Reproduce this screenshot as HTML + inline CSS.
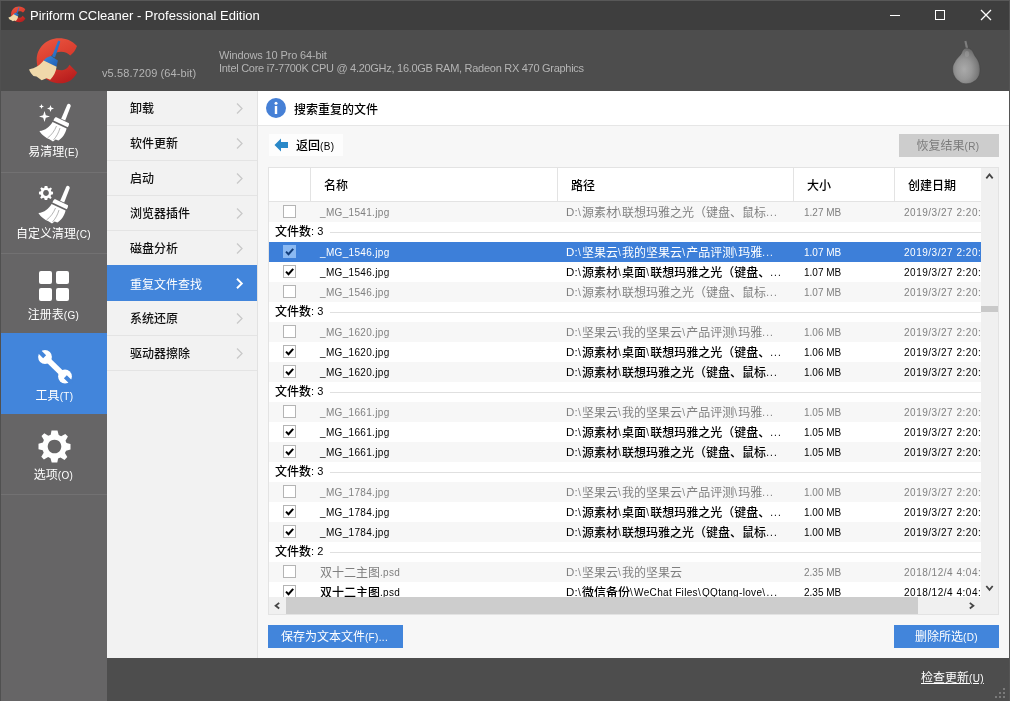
<!DOCTYPE html>
<html lang="zh-CN">
<head>
<meta charset="utf-8">
<title>Piriform CCleaner - Professional Edition</title>
<style>
*{box-sizing:border-box;margin:0;padding:0}
html,body{width:1010px;height:701px;overflow:hidden;background:#4d4d4d}
body{position:relative;font-family:"Liberation Sans","Noto Sans CJK SC",sans-serif;font-size:12px;color:#000}
.abs{position:absolute}
#titlebar{position:absolute;left:0;top:0;width:1010px;height:30px;background:#3e3e3e}
#title{position:absolute;left:30px;top:8px;font-size:13px;line-height:16px;color:#fff;white-space:nowrap;letter-spacing:0px}
#header{position:absolute;left:0;top:30px;width:1010px;height:61px;background:#4d4d4d}
.hd{position:absolute;color:#b4b4b4;font-size:11px;line-height:14px;white-space:nowrap}
#sidebar{position:absolute;left:0;top:91px;width:107px;height:610px;background:#666566}
.sb{position:absolute;left:0;width:107px;color:#fff;text-align:center}
.sb .lb{position:absolute;left:0;width:107px;text-align:center;font-size:12px;line-height:16px;white-space:nowrap}
.sdiv{position:absolute;left:0;width:107px;height:1px;background:#727172}
#submenu{position:absolute;left:107px;top:91px;width:150px;height:567px;background:#f2f2f2}
.sm{position:absolute;left:0;width:150px;height:35px;border-bottom:1px solid #e4e4e4;padding-left:23px;line-height:37px;font-size:12px;color:#111}
.sm.act{background:#4285db;color:#fff;border-bottom-color:#4285db}
.sm.act svg{top:12px}
.sm svg{position:absolute;left:129px;top:11px}
#content{position:absolute;left:257px;top:91px;width:752px;height:567px;background:#f7f7f7;border-left:1px solid #e2e2e2}
#chead{position:absolute;left:0;top:0;width:751px;height:35px;background:#fff;border-bottom:1px solid #e6e6e6}
#footer{position:absolute;left:107px;top:658px;width:903px;height:43px;background:#4d4d4d}
#table{position:absolute;left:268px;top:167px;width:731px;height:448px;border:1px solid #e3e3e3;background:#fff;overflow:hidden}
#thead{position:absolute;left:0;top:0;width:713px;height:34px;background:#fff;border-bottom:1px solid #e3e3e3}
.th{position:absolute;top:0;height:33px;line-height:37px;font-size:12px;color:#000;border-left:1px solid #e3e3e3;white-space:nowrap}
#rows{position:absolute;left:0;top:34px;width:713px;height:396px;overflow:hidden}
.row{position:relative;height:20px;width:713px;white-space:nowrap;font-size:12px;line-height:23px;color:#000;overflow:hidden}
.row.st{background:#f7f7f7}
.row.off{color:#808080}
.row.sel{background:#3d7fd9;color:#fff}
.row>span{position:absolute;top:0;height:20px}
.l{font-size:10px;letter-spacing:0.33px}
.row .l{position:relative;top:-1px}
.cb{left:14px;top:3px !important;width:13px;height:13px !important;border:1px solid #b4b4b4;background:#fff;color:#000}
.cb svg{position:absolute;left:-1px;top:-1px}
.sel .cb{background:#8bb9f2;border-color:#8bb9f2;color:#123e7c}
.c1{left:51px}
.c2{left:297px;width:215px;overflow:hidden;font-size:12px}
.c2 .l{letter-spacing:0.33px}
.b{font-style:normal;letter-spacing:1.3px}
.d{font-style:normal;letter-spacing:1.1px}
.dr{font-style:normal;font-size:11.5px;letter-spacing:0.2px}
.c3{left:535px;font-size:10px;top:-1px !important}
.c4{left:635px;width:78px;overflow:hidden;font-size:10px;letter-spacing:0.52px;top:-1px !important}
.grp{color:#000;background:#fff}
.grp .gl{left:6px;top:-1px;font-size:12px}
.grp .l{font-size:11px;letter-spacing:0.1px}
.gline{position:absolute;left:61px;top:10px;width:660px;height:1px;background:#e0e0e0}
.btn{position:absolute;height:23px;line-height:24px;font-size:12px;text-align:center;white-space:nowrap}
.sm,.th,.row.on,.grp,#chead,.bk{font-weight:500}
.sm.act,.row.sel{font-weight:400}
</style>
</head>
<body><div id="root" style="position:absolute;left:0;top:0;width:1010px;height:701px;will-change:transform">
<div id="titlebar">
  <svg class="abs" style="left:8px;top:6px" width="18" height="16.600" viewBox="28 37 51 47"><use href="#cclogo"/></svg>
  <div id="title">Piriform CCleaner - Professional Edition</div>
  <svg class="abs" style="left:885px;top:5px" width="112" height="20" viewBox="0 0 112 20" fill="none" stroke="#fff" stroke-width="1">
    <path d="M5 10.5 H15"/>
    <rect x="50.5" y="5.5" width="9" height="9"/>
    <path d="M96 5 L106 15 M106 5 L96 15" stroke-width="1.300"/>
  </svg>
</div>
<div id="header">
  <svg class="abs" style="left:28px;top:7px" width="51" height="47" viewBox="28 37 51 47">
    <defs>
      <linearGradient id="lg1" x1="0.200" y1="0" x2="0.600" y2="1"><stop offset="0" stop-color="#ea5540"/><stop offset="0.550" stop-color="#d83a2c"/><stop offset="1" stop-color="#b91f1f"/></linearGradient>
      <linearGradient id="lg2" x1="0" y1="0" x2="1" y2="1"><stop offset="0" stop-color="#3a86d8"/><stop offset="1" stop-color="#1f5fb4"/></linearGradient>
    </defs>
    <g id="cclogo">
    <path d="M77 46 C72 40.500 66 38.200 59 38.200 C46 38.200 36.700 48 36.700 60 C36.700 73.500 47 83.300 60 83.300 C67 83.300 73 80.500 77.200 72.500 L69.500 64.800 C67.500 68.500 65 70.200 62 70.200 C54.500 70.200 49.400 66 49.400 61 C49.400 55.500 54.500 51.700 61 51.700 C65 51.700 68 53 70.200 55.600 C73 53.500 75.500 50.500 77 46 Z" fill="url(#lg1)"/>
    <path d="M58 41 Q59.500 40.500 60.300 41.800 L55 57.500 L52 56.300 Z" fill="url(#lg2)"/>
    <path d="M51 56 L57.900 60.600 L56.400 67 L43.600 60.800 Q46 57 51 56 Z" fill="url(#lg2)"/>
    <path d="M43.600 60.600 L56.600 66.800 C56 72 53.500 76.500 50.200 79.700 L46.500 78.300 L41.700 80.300 L36.500 76.500 L33.500 76 C31.500 74 30 72 29 69.400 C35 68.500 40.500 65 43.600 60.600 Z" fill="#f0d9aa"/>
    </g>
  </svg>
  <div class="hd" style="left:102px;top:36px;font-size:11px;letter-spacing:0.1px">v5.58.7209 (64-bit)</div>
  <div class="hd" style="left:219px;top:18px;letter-spacing:-0.14px">Windows 10 Pro 64-bit</div>
  <div class="hd" style="left:219px;top:31px;letter-spacing:-0.28px">Intel Core i7-7700K CPU @ 4.20GHz, 16.0GB RAM, Radeon RX 470 Graphics</div>
  <svg class="abs" style="left:951px;top:10px" width="31" height="45" viewBox="0 0 31 45">
    <defs><radialGradient id="pg" cx="0.420" cy="0.600" r="0.620"><stop offset="0" stop-color="#aaa"/><stop offset="0.450" stop-color="#979797"/><stop offset="0.800" stop-color="#7c7c7c"/><stop offset="1" stop-color="#666"/></radialGradient></defs>
    <path d="M13.400 1.200 L15.400 0.800 L17.200 8.600 L15 9 Z" fill="#7e7e7e"/>
    <path d="M15.600 8 C19 8 21.500 10 22.600 13.200 C23.500 15.500 24.500 16.800 25.300 17.800 C27 20 29 24 29 29 C29 33 28.500 35 27.700 36.300 C26.500 39 24.500 40.500 23.500 41 C21 43 18 43.750 15 43.750 C12 43.750 10 43 7.800 41 C6 40 4.500 38.500 3.600 36.300 C2.500 34.500 1.700 32 1.700 28.900 C1.700 25.500 2.500 24 3.600 22.400 C4.500 20.500 5.500 19.200 6.800 17.800 C8.500 16 9.500 14.800 10.500 13.200 C11.500 10 13 8 15.600 8 Z" fill="url(#pg)" stroke="#3c3c3c" stroke-width="0.700" stroke-opacity="0.600"/>
    <ellipse cx="16" cy="14" rx="2.200" ry="3" fill="#a4a4a4" opacity="0.400"/>
  </svg>
</div>

<div id="sidebar">
  <div class="sdiv" style="top:81px"></div>
  <div class="sdiv" style="top:162px"></div>
  <div class="abs" style="left:1px;top:242px;width:106px;height:81px;background:#4285db"></div>
  <div class="sdiv" style="top:403px"></div>
  <!-- icons -->
  <svg class="abs" style="left:36px;top:10px" width="40" height="42" viewBox="0 0 40 42" fill="#fff">
    <g id="broom">
    <path d="M31 4.200 Q31.800 2.400 33.600 3 Q35.200 3.800 34.600 5.400 L29.200 19.600 L25.200 17.800 Z"/>
    <path d="M19.800 16 L33 22.200 Q33.400 24.400 31.800 26.200 L17.400 19.600 Q18 17.200 19.800 16 Z"/>
    <path d="M16.600 21 L30.600 27.600 C29.600 32.600 26.400 37 22.400 39.600 L19.600 38.400 L17 40.600 L13.400 38.200 L11 37.200 L8.600 35.600 C6.400 34 4.600 32.200 3.400 30 C9.400 29.400 13.800 25.800 16.600 21 Z"/>
    <path d="M24 27 C22.500 32 20.500 35.500 17.500 39 M20.500 25 C18.500 30 15.500 34 11.500 37" fill="none" stroke="#666566" stroke-width="0.700" opacity="0.700"/>
    </g>
    <path d="M5.500 3 L6.200 4.800 L8 5.500 L6.200 6.200 L5.500 8 L4.800 6.200 L3 5.500 L4.800 4.800 Z"/>
    <path d="M14.500 4 L15.400 6.600 L18 7.500 L15.400 8.400 L14.500 11 L13.600 8.400 L11 7.500 L13.600 6.600 Z"/>
    <path d="M8.500 10 L9.800 14.200 L14 15.500 L9.800 16.800 L8.500 21 L7.200 16.800 L3 15.500 L7.200 14.200 Z"/>
  </svg>
  <div class="lb sb" style="top:53px"><div class="lb">易清理<span class="l">(E)</span></div></div>

  <svg class="abs" style="left:35px;top:92px" width="40" height="42" viewBox="0 0 40 42" fill="#fff">
    <use href="#broom"/>
    <path id="gear8" transform="translate(11,10) scale(0.44)" d="M-3 -16 L3 -16 L4.2 -11.4 L6.6 -10.2 L10.8 -12.6 L13.4 -10 L11 -5.8 L12 -3.4 L16 -2.6 L16 3 L11.6 4.2 L10.4 6.6 L12.8 10.6 L10 13.4 L6 11 L3.6 12 L2.8 16 L-2.8 16 L-4 11.8 L-6.4 10.6 L-10.6 13 L-13.2 10.2 L-10.8 6.2 L-11.8 3.8 L-16 2.8 L-16 -2.8 L-11.6 -4 L-10.6 -6.4 L-13 -10.4 L-10.2 -13.2 L-6.2 -10.8 L-3.8 -11.8 Z M0 -6.6 A6.6 6.6 0 1 0 0.01 -6.6 Z" fill-rule="evenodd"/>
  </svg>
  <div class="lb sb" style="top:135px"><div class="lb">自定义清理<span class="l">(C)</span></div></div>

  <svg class="abs" style="left:39px;top:180px" width="30" height="30" viewBox="0 0 30 30" fill="#fff">
    <rect x="0" y="0" width="13" height="13" rx="2"/><rect x="17" y="0" width="13" height="13" rx="2"/>
    <rect x="0" y="17" width="13" height="13" rx="2"/><rect x="17" y="17" width="13" height="13" rx="2"/>
  </svg>
  <div class="lb sb" style="top:216px"><div class="lb">注册表<span class="l">(G)</span></div></div>

  <svg class="abs" style="left:37px;top:258px" width="36" height="36" viewBox="0 0 36 36">
    <circle cx="8.0" cy="8.0" r="6.900" fill="#fff"/><circle cx="28.0" cy="27.5" r="6.900" fill="#fff"/>
    <path d="M8.000 8.000 L28.000 27.500" stroke="#fff" stroke-width="5.600" fill="none"/>
    <path d="M7.642 7.651 L1.556 1.717 M28.358 27.849 L34.444 33.783" stroke="#4285db" stroke-width="4.200" fill="none"/>
  </svg>
  <div class="lb sb" style="top:297px;left:1px"><div class="lb">工具<span class="l">(T)</span></div></div>

  <svg class="abs" style="left:37.500px;top:338.500px" width="33" height="33" viewBox="-16.500 -16.500 33 33" fill="#fff">
    <path d="M-3 -16 L3 -16 L4.2 -11.4 L6.6 -10.2 L10.8 -12.6 L13.4 -10 L11 -5.8 L12 -3.4 L16 -2.6 L16 3 L11.6 4.2 L10.4 6.6 L12.800 10.600 L10 13.400 L6 11 L3.600 12 L2.800 16 L-2.800 16 L-4 11.800 L-6.400 10.600 L-10.600 13 L-13.200 10.200 L-10.800 6.200 L-11.800 3.800 L-16 2.800 L-16 -2.800 L-11.600 -4 L-10.600 -6.400 L-13 -10.400 L-10.200 -13.200 L-6.200 -10.800 L-3.800 -11.800 Z M0 -6.800 A6.800 6.800 0 1 0 0.010 -6.800 Z" fill-rule="evenodd"/>
  </svg>
  <div class="lb sb" style="top:376px"><div class="lb">选项<span class="l">(O)</span></div></div>
</div>

<div id="submenu">
  <div class="sm" style="top:0">卸载<svg width="8" height="13" viewBox="0 0 8 13"><path d="M1 1.500 L6 6.500 L1 11.500" fill="none" stroke="#c9c9c9" stroke-width="1.300"/></svg></div>
  <div class="sm" style="top:35px">软件更新<svg width="8" height="13" viewBox="0 0 8 13"><path d="M1 1.500 L6 6.500 L1 11.500" fill="none" stroke="#c9c9c9" stroke-width="1.300"/></svg></div>
  <div class="sm" style="top:70px">启动<svg width="8" height="13" viewBox="0 0 8 13"><path d="M1 1.500 L6 6.500 L1 11.500" fill="none" stroke="#c9c9c9" stroke-width="1.300"/></svg></div>
  <div class="sm" style="top:105px">浏览器插件<svg width="8" height="13" viewBox="0 0 8 13"><path d="M1 1.500 L6 6.500 L1 11.500" fill="none" stroke="#c9c9c9" stroke-width="1.300"/></svg></div>
  <div class="sm" style="top:140px">磁盘分析<svg width="8" height="13" viewBox="0 0 8 13"><path d="M1 1.500 L6 6.500 L1 11.500" fill="none" stroke="#c9c9c9" stroke-width="1.300"/></svg></div>
  <div class="sm act" style="top:174px;height:36px;line-height:40px">重复文件查找<svg width="8" height="13" viewBox="0 0 8 13"><path d="M1 1.800 L5.800 6.500 L1 11.200" fill="none" stroke="#fff" stroke-width="1.900"/></svg></div>
  <div class="sm" style="top:210px">系统还原<svg width="8" height="13" viewBox="0 0 8 13"><path d="M1 1.500 L6 6.500 L1 11.500" fill="none" stroke="#c9c9c9" stroke-width="1.300"/></svg></div>
  <div class="sm" style="top:245px">驱动器擦除<svg width="8" height="13" viewBox="0 0 8 13"><path d="M1 1.500 L6 6.500 L1 11.500" fill="none" stroke="#c9c9c9" stroke-width="1.300"/></svg></div>
</div>

<div id="content">
  <div id="chead">
    <svg class="abs" style="left:8px;top:7px" width="20" height="20" viewBox="0 0 20 20"><circle cx="10" cy="10" r="10" fill="#4680d6"/><rect x="8.800" y="8" width="2.400" height="8" fill="#fff"/><circle cx="10" cy="5.200" r="1.500" fill="#fff"/></svg>
    <div class="abs" style="left:36px;top:11px;font-size:12px;line-height:16px;white-space:nowrap">搜索重复的文件</div>
  </div>
</div>

<div class="abs" style="left:269px;top:134px;width:74px;height:22px;background:#fdfdfd"></div>
<svg class="abs" style="left:274px;top:138px" width="15" height="14" viewBox="0 0 15 14"><path d="M0.500 7 L7 0.500 L7 4 L14 4 L14 10 L7 10 L7 13.500 Z" fill="#2a88c8"/></svg>
<div class="abs bk" style="left:296px;top:138px;font-size:12px;line-height:16px;white-space:nowrap">返回<span class="l">(B)</span></div>
<div class="btn" style="left:899px;top:134px;width:100px;padding-right:2px;background:#cdcdcd;color:#7b7b7b">恢复结果<span class="l">(R)</span></div>

<div id="table">
  <div id="thead">
    <div class="th" style="left:0;width:41px;border-left:0"></div>
    <div class="th" style="left:41px;width:247px;padding-left:13px">名称</div>
    <div class="th" style="left:288px;width:236px;padding-left:13px">路径</div>
    <div class="th" style="left:524px;width:101px;padding-left:13px">大小</div>
    <div class="th" style="left:625px;width:88px;padding-left:13px">创建日期</div>
  </div>
  <div id="rows">
<div class="row st off"><span class="cb"></span><span class="c1"><span class="l">_MG_1541.jpg</span></span><span class="c2"><span class="l"><i class="dr">D:</i><i class="b">\</i></span>源素材<span class="l"><i class="b">\</i></span>联想玛雅之光（键盘、鼠标<span class="l"><i class="d">...</i></span></span><span class="c3">1.27 MB</span><span class="c4">2019/3/27 2:20:35</span></div>
<div class="row grp"><span class="gl">文件数<span class="l">: 3</span></span><i class="gline"></i></div>
<div class="row st sel on"><span class="cb"><svg viewBox="0 0 13 13" width="13" height="13"><path d="M3 6.6 L5.5 9.2 L10.2 3.8" fill="none" stroke="currentColor" stroke-width="2"/></svg></span><span class="c1"><span class="l">_MG_1546.jpg</span></span><span class="c2"><span class="l"><i class="dr">D:</i><i class="b">\</i></span>坚果云<span class="l"><i class="b">\</i></span>我的坚果云<span class="l"><i class="b">\</i></span>产品评测<span class="l"><i class="b">\</i></span>玛雅<span class="l"><i class="d">...</i></span></span><span class="c3">1.07 MB</span><span class="c4">2019/3/27 2:20:35</span></div>
<div class="row on"><span class="cb"><svg viewBox="0 0 13 13" width="13" height="13"><path d="M3 6.6 L5.5 9.2 L10.2 3.8" fill="none" stroke="currentColor" stroke-width="2"/></svg></span><span class="c1"><span class="l">_MG_1546.jpg</span></span><span class="c2"><span class="l"><i class="dr">D:</i><i class="b">\</i></span>源素材<span class="l"><i class="b">\</i></span>桌面<span class="l"><i class="b">\</i></span>联想玛雅之光（键盘、<span class="l"><i class="d">...</i></span></span><span class="c3">1.07 MB</span><span class="c4">2019/3/27 2:20:35</span></div>
<div class="row st off"><span class="cb"></span><span class="c1"><span class="l">_MG_1546.jpg</span></span><span class="c2"><span class="l"><i class="dr">D:</i><i class="b">\</i></span>源素材<span class="l"><i class="b">\</i></span>联想玛雅之光（键盘、鼠标<span class="l"><i class="d">...</i></span></span><span class="c3">1.07 MB</span><span class="c4">2019/3/27 2:20:35</span></div>
<div class="row grp"><span class="gl">文件数<span class="l">: 3</span></span><i class="gline"></i></div>
<div class="row st off"><span class="cb"></span><span class="c1"><span class="l">_MG_1620.jpg</span></span><span class="c2"><span class="l"><i class="dr">D:</i><i class="b">\</i></span>坚果云<span class="l"><i class="b">\</i></span>我的坚果云<span class="l"><i class="b">\</i></span>产品评测<span class="l"><i class="b">\</i></span>玛雅<span class="l"><i class="d">...</i></span></span><span class="c3">1.06 MB</span><span class="c4">2019/3/27 2:20:35</span></div>
<div class="row on"><span class="cb"><svg viewBox="0 0 13 13" width="13" height="13"><path d="M3 6.6 L5.5 9.2 L10.2 3.8" fill="none" stroke="currentColor" stroke-width="2"/></svg></span><span class="c1"><span class="l">_MG_1620.jpg</span></span><span class="c2"><span class="l"><i class="dr">D:</i><i class="b">\</i></span>源素材<span class="l"><i class="b">\</i></span>桌面<span class="l"><i class="b">\</i></span>联想玛雅之光（键盘、<span class="l"><i class="d">...</i></span></span><span class="c3">1.06 MB</span><span class="c4">2019/3/27 2:20:35</span></div>
<div class="row st on"><span class="cb"><svg viewBox="0 0 13 13" width="13" height="13"><path d="M3 6.6 L5.5 9.2 L10.2 3.8" fill="none" stroke="currentColor" stroke-width="2"/></svg></span><span class="c1"><span class="l">_MG_1620.jpg</span></span><span class="c2"><span class="l"><i class="dr">D:</i><i class="b">\</i></span>源素材<span class="l"><i class="b">\</i></span>联想玛雅之光（键盘、鼠标<span class="l"><i class="d">...</i></span></span><span class="c3">1.06 MB</span><span class="c4">2019/3/27 2:20:35</span></div>
<div class="row grp"><span class="gl">文件数<span class="l">: 3</span></span><i class="gline"></i></div>
<div class="row st off"><span class="cb"></span><span class="c1"><span class="l">_MG_1661.jpg</span></span><span class="c2"><span class="l"><i class="dr">D:</i><i class="b">\</i></span>坚果云<span class="l"><i class="b">\</i></span>我的坚果云<span class="l"><i class="b">\</i></span>产品评测<span class="l"><i class="b">\</i></span>玛雅<span class="l"><i class="d">...</i></span></span><span class="c3">1.05 MB</span><span class="c4">2019/3/27 2:20:35</span></div>
<div class="row on"><span class="cb"><svg viewBox="0 0 13 13" width="13" height="13"><path d="M3 6.6 L5.5 9.2 L10.2 3.8" fill="none" stroke="currentColor" stroke-width="2"/></svg></span><span class="c1"><span class="l">_MG_1661.jpg</span></span><span class="c2"><span class="l"><i class="dr">D:</i><i class="b">\</i></span>源素材<span class="l"><i class="b">\</i></span>桌面<span class="l"><i class="b">\</i></span>联想玛雅之光（键盘、<span class="l"><i class="d">...</i></span></span><span class="c3">1.05 MB</span><span class="c4">2019/3/27 2:20:35</span></div>
<div class="row st on"><span class="cb"><svg viewBox="0 0 13 13" width="13" height="13"><path d="M3 6.6 L5.5 9.2 L10.2 3.8" fill="none" stroke="currentColor" stroke-width="2"/></svg></span><span class="c1"><span class="l">_MG_1661.jpg</span></span><span class="c2"><span class="l"><i class="dr">D:</i><i class="b">\</i></span>源素材<span class="l"><i class="b">\</i></span>联想玛雅之光（键盘、鼠标<span class="l"><i class="d">...</i></span></span><span class="c3">1.05 MB</span><span class="c4">2019/3/27 2:20:35</span></div>
<div class="row grp"><span class="gl">文件数<span class="l">: 3</span></span><i class="gline"></i></div>
<div class="row st off"><span class="cb"></span><span class="c1"><span class="l">_MG_1784.jpg</span></span><span class="c2"><span class="l"><i class="dr">D:</i><i class="b">\</i></span>坚果云<span class="l"><i class="b">\</i></span>我的坚果云<span class="l"><i class="b">\</i></span>产品评测<span class="l"><i class="b">\</i></span>玛雅<span class="l"><i class="d">...</i></span></span><span class="c3">1.00 MB</span><span class="c4">2019/3/27 2:20:35</span></div>
<div class="row on"><span class="cb"><svg viewBox="0 0 13 13" width="13" height="13"><path d="M3 6.6 L5.5 9.2 L10.2 3.8" fill="none" stroke="currentColor" stroke-width="2"/></svg></span><span class="c1"><span class="l">_MG_1784.jpg</span></span><span class="c2"><span class="l"><i class="dr">D:</i><i class="b">\</i></span>源素材<span class="l"><i class="b">\</i></span>桌面<span class="l"><i class="b">\</i></span>联想玛雅之光（键盘、<span class="l"><i class="d">...</i></span></span><span class="c3">1.00 MB</span><span class="c4">2019/3/27 2:20:35</span></div>
<div class="row st on"><span class="cb"><svg viewBox="0 0 13 13" width="13" height="13"><path d="M3 6.6 L5.5 9.2 L10.2 3.8" fill="none" stroke="currentColor" stroke-width="2"/></svg></span><span class="c1"><span class="l">_MG_1784.jpg</span></span><span class="c2"><span class="l"><i class="dr">D:</i><i class="b">\</i></span>源素材<span class="l"><i class="b">\</i></span>联想玛雅之光（键盘、鼠标<span class="l"><i class="d">...</i></span></span><span class="c3">1.00 MB</span><span class="c4">2019/3/27 2:20:35</span></div>
<div class="row grp"><span class="gl">文件数<span class="l">: 2</span></span><i class="gline"></i></div>
<div class="row st off"><span class="cb"></span><span class="c1">双十二主图<span class="l">.psd</span></span><span class="c2"><span class="l"><i class="dr">D:</i><i class="b">\</i></span>坚果云<span class="l"><i class="b">\</i></span>我的坚果云</span><span class="c3">2.35 MB</span><span class="c4">2018/12/4 4:04:12</span></div>
<div class="row on"><span class="cb"><svg viewBox="0 0 13 13" width="13" height="13"><path d="M3 6.6 L5.5 9.2 L10.2 3.8" fill="none" stroke="currentColor" stroke-width="2"/></svg></span><span class="c1">双十二主图<span class="l">.psd</span></span><span class="c2"><span class="l"><i class="dr">D:</i><i class="b">\</i></span>微信备份<span class="l"><i class="b">\</i>WeChat Files<i class="b">\</i>QQtang-love<i class="b">\</i><i class="d">...</i></span></span><span class="c3">2.35 MB</span><span class="c4">2018/12/4 4:04:12</span></div>
  </div>
  <!-- vertical scrollbar -->
  <div class="abs" style="left:712px;top:0;width:17px;height:446px;background:#f0f0f0"></div>
  <div class="abs" style="left:712px;top:138px;width:17px;height:6px;background:#c9c9c9"></div>
  <!-- horizontal scrollbar -->
  <div class="abs" style="left:0;top:429px;width:713px;height:17px;background:#f0f0f0"></div>
  <div class="abs" style="left:17px;top:429px;width:632px;height:17px;background:#cdcdcd"></div>
  <svg class="abs" style="left:0;top:0" width="729" height="446" viewBox="0 0 729 446" fill="none" stroke="#464646" stroke-width="1.800"><path d="M717.300 10.300 L720.500 6.500 L723.700 10.300 M717.300 418 L720.500 421.800 L723.700 418 M10.200 434.900 L6.600 437.700 L10.200 440.500 M700.800 434.900 L704.400 437.700 L700.800 440.500"/></svg>
</div>

<div class="btn" style="left:268px;top:625px;width:135px;padding-right:2px;background:#4285db;color:#fff">保存为文本文件<span class="l">(F)...</span></div>
<div class="btn" style="left:894px;top:625px;width:105px;background:#4285db;color:#fff">删除所选<span class="l">(D)</span></div>

<div id="footer">
  <div class="abs" style="left:814px;top:12px;font-size:12px;line-height:16px;color:#fff;text-decoration:underline;white-space:nowrap">检查更新<span class="l">(U)</span></div>
  <svg class="abs" style="left:886px;top:28px" width="14" height="14" viewBox="0 0 14 14" fill="#7a7a7a">
    <rect x="10" y="2" width="2" height="2"/><rect x="6" y="6" width="2" height="2"/><rect x="10" y="6" width="2" height="2"/>
    <rect x="2" y="10" width="2" height="2"/><rect x="6" y="10" width="2" height="2"/><rect x="10" y="10" width="2" height="2"/>
  </svg>
</div>
<div class="abs" style="left:1009px;top:0;width:1px;height:701px;background:#555"></div>
<div class="abs" style="left:0;top:0;width:1px;height:701px;background:#505050"></div>
<div class="abs" style="left:0;top:0;width:1010px;height:1px;background:#585858"></div>
</div></body>
</html>
